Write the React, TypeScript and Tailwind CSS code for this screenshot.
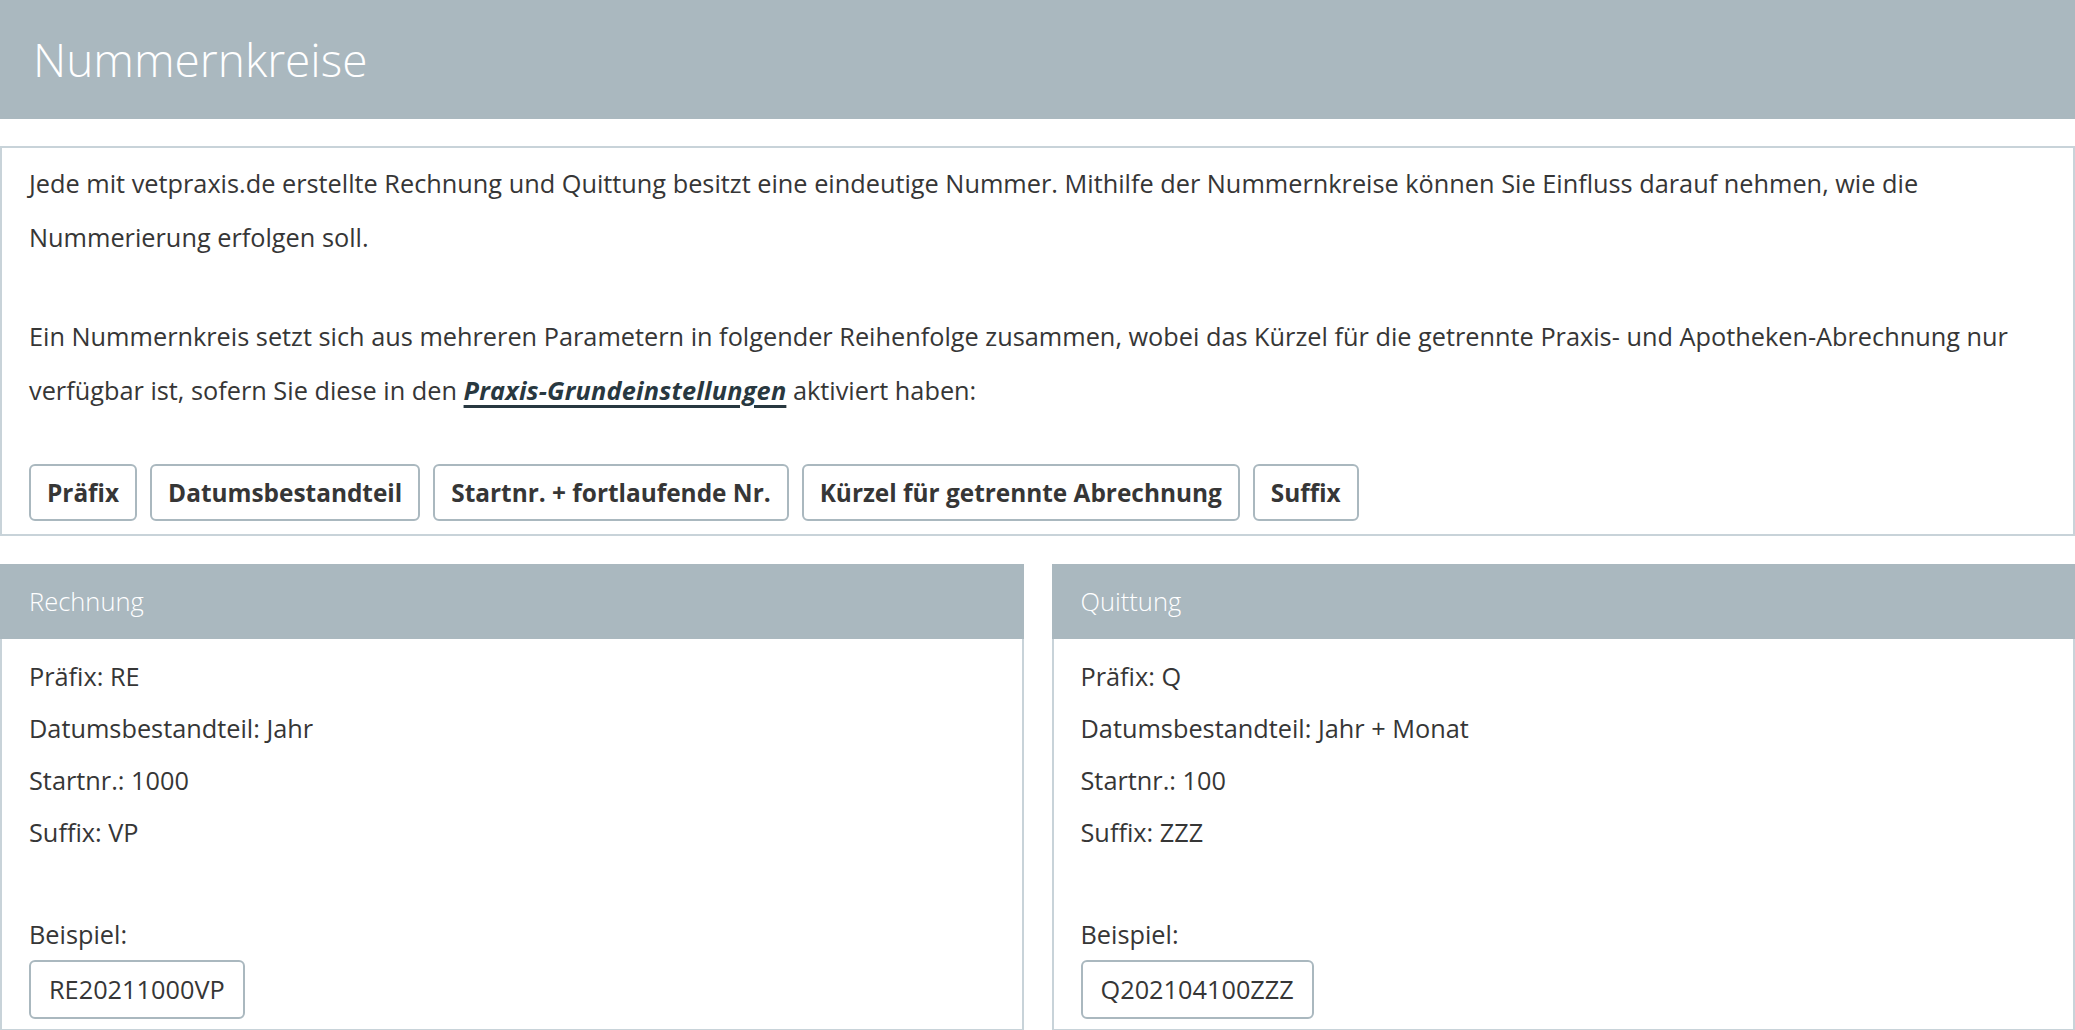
const params = ['Präfix', 'Datumsbestandteil', 'Startnr. + fortlaufende Nr.', 'Kürzel für getrennte Abrechnung', 'Suffix']

type CardProps = {
	title: string
	rows: string[]
	example: string
}

function Card({ title, rows, example }: CardProps) {
	return (
		<div className="flex flex-col">
			<div className="flex h-[75px] items-center bg-[#aab8bf] px-[29px] text-[25.5px] font-light text-white">
				{title}
			</div>
			<div className="border-2 border-t-0 border-[#c8d3d9] px-[27px] pt-[11px] pb-[10px] leading-[52px]">
				{rows.map((row) => (
					<div key={row}>{row}</div>
				))}
				<div className="mt-[50px]">Beispiel:</div>
				<div className="inline-block rounded-md border-2 border-[#aab8bf] px-[18px] py-[9px] leading-[37px]">
					{example}
				</div>
			</div>
		</div>
	)
}

export default function App() {
	return (
		<div className="min-h-screen bg-white font-['Open_Sans',sans-serif] text-[25.3px] text-[#363636]">
			<div className="flex h-[119px] items-center bg-[#aab8bf] px-[33px] text-[46px] font-light text-white">
				Nummernkreise
			</div>

			<div className="mt-[27px] border-2 border-[#c8d3d9] px-[27px] pt-[8px] pb-[13px] leading-[54px]">
				<p>
					Jede mit vetpraxis.de erstellte Rechnung und Quittung besitzt eine eindeutige Nummer. Mithilfe der
					Nummernkreise können Sie Einfluss darauf nehmen, wie die
					<br />
					Nummerierung erfolgen soll.
				</p>
				<p className="mt-[45px]">
					Ein Nummernkreis setzt sich aus mehreren Parametern in folgender Reihenfolge zusammen, wobei das
					Kürzel für die getrennte Praxis- und Apotheken-Abrechnung nur
					<br />
					verfügbar ist, sofern Sie diese in den{' '}
					<a
						href="#"
						className="font-bold italic tracking-[0.2px] text-[#283840] underline decoration-[3px] underline-offset-[5px]"
					>
						Praxis-Grundeinstellungen
					</a>{' '}
					aktiviert haben:
				</p>
				<div className="mt-[47px] flex gap-[13px]">
					{params.map((p) => (
						<div
							key={p}
							className="flex h-[57px] items-center rounded-md border-2 border-[#aab8bf] px-[16px] text-[24.4px] font-bold"
						>
							{p}
						</div>
					))}
				</div>
			</div>

			<div className="mt-[28px] grid grid-cols-2 gap-[28px]">
				<Card
					title="Rechnung"
					rows={['Präfix: RE', 'Datumsbestandteil: Jahr', 'Startnr.: 1000', 'Suffix: VP']}
					example="RE20211000VP"
				/>
				<Card
					title="Quittung"
					rows={['Präfix: Q', 'Datumsbestandteil: Jahr + Monat', 'Startnr.: 100', 'Suffix: ZZZ']}
					example="Q202104100ZZZ"
				/>
			</div>
		</div>
	)
}
